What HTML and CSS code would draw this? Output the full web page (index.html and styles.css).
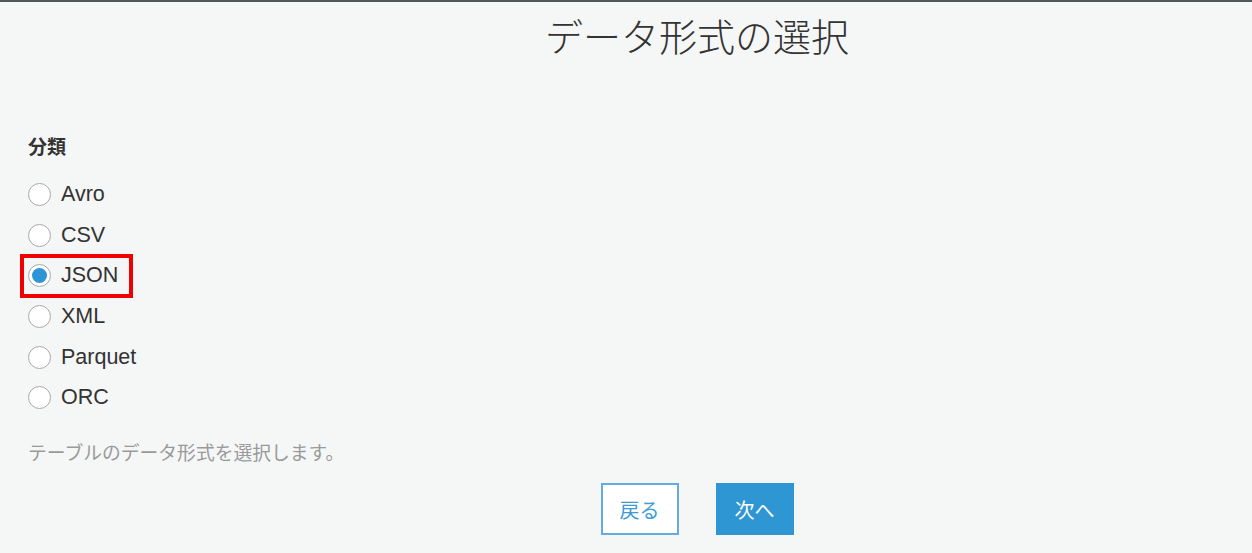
FILE: index.html
```html
<!DOCTYPE html>
<html lang="ja">
<head>
<meta charset="utf-8">
<link rel="stylesheet" href="styles.css">
</head>
<body>
<div class="page">
  <h1 class="title">データ形式の選択</h1>
  <div class="form">
    <div class="label">分類</div>
    <div class="options">
      <label class="option"><span class="radio"></span><span class="opt-text">Avro</span></label>
      <label class="option"><span class="radio"></span><span class="opt-text">CSV</span></label>
      <label class="option selected"><span class="radio checked"></span><span class="opt-text">JSON</span></label>
      <label class="option"><span class="radio"></span><span class="opt-text">XML</span></label>
      <label class="option"><span class="radio"></span><span class="opt-text">Parquet</span></label>
      <label class="option"><span class="radio"></span><span class="opt-text">ORC</span></label>
    </div>
    <div class="help">テーブルのデータ形式を選択します。</div>
  </div>
  <div class="buttons">
    <button class="btn btn-back">戻る</button>
    <button class="btn btn-next">次へ</button>
  </div>
</div>
</body>
</html>
```
FILE: styles.css
```css
html, body {
  margin: 0;
  padding: 0;
}
body {
  background: #f5f6f6;
  font-family: "Liberation Sans", Arial, "Noto Sans CJK JP", sans-serif;
  color: #333;
  width: 1252px;
  height: 553px;
  overflow: hidden;
}
.page {
  border-top: 2px solid #4f595e;
  box-sizing: border-box;
  height: 553px;
}
.title {
  margin: 0;
  padding: 7px 0 0 142px;
  text-align: center;
  font-family: "Noto Sans CJK JP", sans-serif;
  font-weight: 300;
  font-size: 38px;
  line-height: 52px;
  color: #333;
  letter-spacing: 0;
}
.form {
  padding: 73px 0 0 28px;
}
.label {
  font-family: "Noto Sans CJK JP", sans-serif;
  font-weight: 700;
  font-size: 19px;
  line-height: 24px;
  color: #333;
  margin-bottom: 16px;
}
.options {
  display: flex;
  flex-direction: column;
}
.option {
  display: flex;
  align-items: center;
  height: 40.7px;
  position: relative;
  font-size: 21.5px;
}
.option.selected::before {
  content: "";
  position: absolute;
  left: -8px;
  top: -1px;
  width: 105px;
  height: 36px;
  border: 4px solid #f00000;
}
.radio {
  width: 21px;
  height: 21px;
  border: 1.5px solid #a8a8a8;
  border-radius: 50%;
  background: #fff;
  box-sizing: content-box;
  display: flex;
  align-items: center;
  justify-content: center;
  margin-right: 10px;
  flex: none;
}
.radio.checked::after {
  content: "";
  width: 15px;
  height: 15px;
  border-radius: 50%;
  background: #2e96d6;
}
.opt-text {
  color: #333;
}
.help {
  margin-top: 22px;
  font-family: "Noto Sans CJK JP", sans-serif;
  font-size: 18.8px;
  line-height: 24px;
  color: #9a9a9a;
}
.buttons {
  display: flex;
  justify-content: center;
  gap: 37px;
  padding-left: 142px;
  margin-top: 19px;
}
.btn {
  width: 78px;
  height: 52px;
  font-family: "Noto Sans CJK JP", sans-serif;
  font-size: 20px;
  border-radius: 0;
  padding: 0;
  box-sizing: border-box;
  cursor: pointer;
}
.btn-back {
  background: #fff;
  color: #3d9bd5;
  border: 2px solid #64ace0;
}
.btn-next {
  background: #2e96d3;
  color: #fff;
  border: 1px solid #2e96d3;
}
```
